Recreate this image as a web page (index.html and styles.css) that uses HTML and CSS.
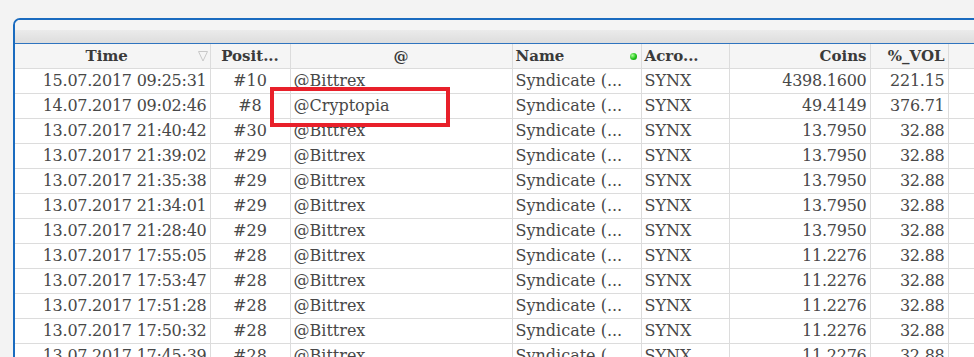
FILE: index.html
```html
<!DOCTYPE html>
<html>
<head>
<meta charset="utf-8">
<link rel="stylesheet" href="styles.css">
</head>
<body>
<div class="panel">
  <div class="panel-top"></div>
  <div class="panel-band"></div>
  <table class="grid">
    <colgroup>
      <col class="c-time"><col class="c-pos"><col class="c-at"><col class="c-name"><col class="c-acro"><col class="c-coins"><col class="c-vol"><col class="c-rest">
    </colgroup>
    <thead>
      <tr>
        <th class="c time-h">Time<svg class="sort" width="10" height="12" viewBox="0 0 10 12"><path d="M0.5 1.5 L9.5 1.5 L5 11 Z" fill="none" stroke="#c8c8c8" stroke-width="1"/></svg></th>
        <th class="c">Posit...</th>
        <th class="c">@</th>
        <th class="l name-h">Name<span class="dot"></span></th>
        <th class="l">Acro...</th>
        <th class="r">Coins</th>
        <th class="r">%_VOL</th>
        <th></th>
      </tr>
    </thead>
    <tbody>
      <tr><td class="r n">15.07.2017 09:25:31</td><td class="c">#10</td><td class="l">@Bittrex</td><td class="l">Syndicate (...</td><td class="l">SYNX</td><td class="r n">4398.1600</td><td class="r n">221.15</td><td></td></tr>
      <tr><td class="r n">14.07.2017 09:02:46</td><td class="c">#8</td><td class="l">@Cryptopia</td><td class="l">Syndicate (...</td><td class="l">SYNX</td><td class="r n">49.4149</td><td class="r n">376.71</td><td></td></tr>
      <tr><td class="r n">13.07.2017 21:40:42</td><td class="c">#30</td><td class="l">@Bittrex</td><td class="l">Syndicate (...</td><td class="l">SYNX</td><td class="r n">13.7950</td><td class="r n">32.88</td><td></td></tr>
      <tr><td class="r n">13.07.2017 21:39:02</td><td class="c">#29</td><td class="l">@Bittrex</td><td class="l">Syndicate (...</td><td class="l">SYNX</td><td class="r n">13.7950</td><td class="r n">32.88</td><td></td></tr>
      <tr><td class="r n">13.07.2017 21:35:38</td><td class="c">#29</td><td class="l">@Bittrex</td><td class="l">Syndicate (...</td><td class="l">SYNX</td><td class="r n">13.7950</td><td class="r n">32.88</td><td></td></tr>
      <tr><td class="r n">13.07.2017 21:34:01</td><td class="c">#29</td><td class="l">@Bittrex</td><td class="l">Syndicate (...</td><td class="l">SYNX</td><td class="r n">13.7950</td><td class="r n">32.88</td><td></td></tr>
      <tr><td class="r n">13.07.2017 21:28:40</td><td class="c">#29</td><td class="l">@Bittrex</td><td class="l">Syndicate (...</td><td class="l">SYNX</td><td class="r n">13.7950</td><td class="r n">32.88</td><td></td></tr>
      <tr><td class="r n">13.07.2017 17:55:05</td><td class="c">#28</td><td class="l">@Bittrex</td><td class="l">Syndicate (...</td><td class="l">SYNX</td><td class="r n">11.2276</td><td class="r n">32.88</td><td></td></tr>
      <tr><td class="r n">13.07.2017 17:53:47</td><td class="c">#28</td><td class="l">@Bittrex</td><td class="l">Syndicate (...</td><td class="l">SYNX</td><td class="r n">11.2276</td><td class="r n">32.88</td><td></td></tr>
      <tr><td class="r n">13.07.2017 17:51:28</td><td class="c">#28</td><td class="l">@Bittrex</td><td class="l">Syndicate (...</td><td class="l">SYNX</td><td class="r n">11.2276</td><td class="r n">32.88</td><td></td></tr>
      <tr><td class="r n">13.07.2017 17:50:32</td><td class="c">#28</td><td class="l">@Bittrex</td><td class="l">Syndicate (...</td><td class="l">SYNX</td><td class="r n">11.2276</td><td class="r n">32.88</td><td></td></tr>
      <tr><td class="r n">13.07.2017 17:45:39</td><td class="c">#28</td><td class="l">@Bittrex</td><td class="l">Syndicate (...</td><td class="l">SYNX</td><td class="r n">11.2276</td><td class="r n">32.88</td><td></td></tr>
    </tbody>
  </table>
  <div class="highlight"></div>
</div>
</body>
</html>
```
FILE: styles.css
```css
html, body {
  margin: 0;
  padding: 0;
  background: #f3f3f3;
  overflow: hidden;
  height: 357px;
}
.panel {
  position: relative;
  margin: 18px 0 0 13px;
  width: 980px;
  border-left: 2px solid #1a6bbf;
  border-top: 2px solid #1a6bbf;
  border-top-left-radius: 7px;
  background: #f4f4f4;
}
.panel-top {
  height: 10px;
  background: #f4f4f4;
  border-top-left-radius: 5px;
}
.panel-band {
  height: 13px;
  background: linear-gradient(#ebebeb, #dddddd);
  border-bottom: 1px solid #2f74bf;
}
.grid {
  border-collapse: collapse;
  table-layout: fixed;
  width: 980px;
  font-family: "DejaVu Serif", serif;
  font-size: 16px;
  color: #484848;
  background: #fff;
}
.c-time { width: 195px; }
.c-pos { width: 80px; }
.c-at { width: 222px; }
.c-name { width: 129px; }
.c-acro { width: 88px; }
.c-coins { width: 141px; }
.c-vol { width: 78px; }
.grid th, .grid td {
  height: 24px;
  padding: 0 3px;
  border-right: 1px solid #dcdcdc;
  border-bottom: 1px solid #dcdcdc;
  white-space: nowrap;
  overflow: hidden;
  line-height: 24px;
}
.grid th {
  background: #f5f5f5;
  font-weight: bold;
  font-size: 15px;
  color: #3a3a3a;
}
.n { letter-spacing: -0.25px; }
.r { text-align: right; }
.c { text-align: center; }
.l { text-align: left; }
.grid th.time-h {
  position: relative;
  padding-right: 14px;
}
.sort {
  position: absolute;
  right: 2px;
  top: 6px;
}
.name-h { position: relative; }
.dot {
  position: absolute;
  right: 4px;
  top: 9px;
  width: 7px;
  height: 7px;
  border-radius: 50%;
  background: radial-gradient(circle at 35% 35%, #a8ff95, #1ec218 55%, #0d8a0a);
}
.highlight {
  position: absolute;
  left: 255px;
  top: 67px;
  width: 172px;
  height: 32px;
  border: 4px solid #e8202a;
}
```
